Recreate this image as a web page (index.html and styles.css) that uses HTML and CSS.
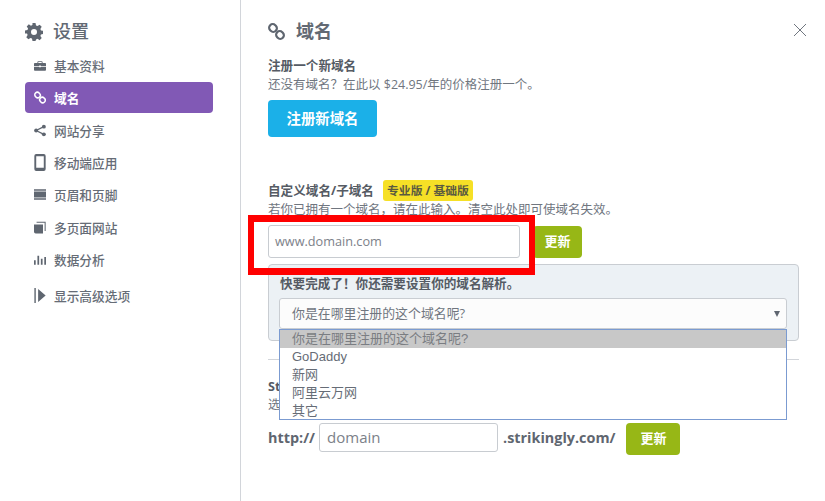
FILE: index.html
```html
<!DOCTYPE html>
<html lang="zh">
<head>
<meta charset="utf-8">
<title>设置</title>
<link rel="stylesheet" href="styles.css">
</head>
<body>
<div class="app">
  <aside class="sidebar">
    <div class="side-title">
      <svg class="gear" viewBox="0 0 24 24"><path fill="#5f6670" fill-rule="evenodd" d="M10 0h4l.7 3.300 2 .8L19.500 2.300l2.800 2.800-1.800 2.800.8 2 3.300.7v4l-3.300.7-.8 2 1.800 2.800-2.800 2.800-2.800-1.800-2 .8L14 24h-4l-.7-3.300-2-.8-2.800 1.800-2.800-2.800 1.800-2.800-.8-2L0 14v-4l3.300-.7.8-2-1.800-2.800 2.800-2.800 2.800 1.800 2-.8zM12 8a4 4 0 1 0 0 8 4 4 0 0 0 0-8z"/></svg>
      <span>设置</span>
    </div>
    <nav class="nav">
      <a class="nav-item first"><svg class="ico" viewBox="0 0 14 14"><path fill="#5f6670" d="M5 2h4a1 1 0 0 1 1 1v1h3a1 1 0 0 1 1 1v2.500H8V7H6v.5H0V5a1 1 0 0 1 1-1h3V3a1 1 0 0 1 1-1zm0 1v1h4V3zM0 8.500h6V9h2v-.5h6V12a1 1 0 0 1-1 1H1a1 1 0 0 1-1-1z"/></svg>基本资料</a>
      <a class="nav-item active"><svg class="ico" viewBox="0 0 17 17"><g fill="none" stroke="#fff" stroke-width="2.200"><rect x="1" y="1.400" width="8" height="7.200" rx="3.600" transform="rotate(45 5 5)"/><rect x="8" y="8.400" width="8" height="7.200" rx="3.600" transform="rotate(45 12 12)"/></g></svg>域名</a>
      <a class="nav-item"><svg class="ico" viewBox="0 0 14 14"><g fill="#5f6670"><circle cx="11.500" cy="2.500" r="2.300"/><circle cx="2.500" cy="7" r="2.300"/><circle cx="11.500" cy="11.500" r="2.300"/></g><path fill="none" stroke="#5f6670" stroke-width="1.400" d="M11.500 2.500L2.500 7l9 4.500"/></svg>网站分享</a>
      <a class="nav-item"><svg class="ico ico-tall" viewBox="0 0 12 18"><path fill="#5f6670" fill-rule="evenodd" d="M2 0h8a2 2 0 0 1 2 2v14a2 2 0 0 1-2 2H2a2 2 0 0 1-2-2V2a2 2 0 0 1 2-2zm0 2.500v12h8v-12z"/></svg>移动端应用</a>
      <a class="nav-item"><svg class="ico" viewBox="0 0 14 14"><path fill="#5f6670" d="M0 1h14v1.500H0zM0 3.500h14v7H0zM0 11.500h14V13H0z"/></svg>页眉和页脚</a>
      <a class="nav-item"><svg class="ico" viewBox="0 0 14 14"><path fill="#5f6670" d="M0 3.500h10.500V14H2a2 2 0 0 1-2-2z"/><path fill="none" stroke="#5f6670" stroke-width="1.200" d="M3 1h10v10"/></svg>多页面网站</a>
      <a class="nav-item"><svg class="ico" viewBox="0 0 14 14"><path fill="#5f6670" d="M0 8h2v5H0zM4 2.500h2V13H4zM8 6h2v7H8zM12 4h2v9h-2z"/></svg>数据分析</a>
      <a class="nav-item nav-adv"><svg class="ico ico-adv" viewBox="0 0 12 16"><path fill="#5f6670" d="M0 0h1.500v16H0zM4 1l8 7-8 7z"/></svg>显示高级选项</a>
    </nav>
  </aside>

  <main class="main">
    <svg class="close" viewBox="0 0 14 14"><path fill="none" stroke="#70767f" d="M1 1l12 12M13 1L1 13"/></svg>

    <header class="main-title">
      <svg class="link-big" viewBox="0 0 17 17"><g fill="none" stroke="#5f6670" stroke-width="2.200"><rect x="1" y="1.400" width="8" height="7.200" rx="3.600" transform="rotate(45 5 5)"/><rect x="8" y="8.400" width="8" height="7.200" rx="3.600" transform="rotate(45 12 12)"/></g></svg>
      <span>域名</span>
    </header>

    <section class="register">
      <h3 class="label">注册一个新域名</h3>
      <p class="desc">还没有域名？在此以 $24.95/年的价格注册一个。</p>
      <button class="btn-blue">注册新域名</button>
    </section>

    <section class="custom">
      <div class="custom-head">
        <h3 class="label">自定义域名/子域名</h3>
        <span class="badge">专业版 / 基础版</span>
      </div>
      <p class="desc">若你已拥有一个域名，请在此输入。清空此处即可使域名失效。</p>
      <div class="input-row">
        <div class="field field-main">www.domain.com</div>
        <button class="btn-green btn-update">更新</button>
      </div>
      <div class="panel">
        <p class="panel-title">快要完成了！你还需要设置你的域名解析。</p>
        <div class="select">
          <span>你是在哪里注册的这个域名呢?</span>
          <i class="caret"></i>
          <ul class="options">
            <li class="selected">你是在哪里注册的这个域名呢?</li>
            <li>GoDaddy</li>
            <li>新网</li>
            <li>阿里云万网</li>
            <li>其它</li>
          </ul>
        </div>
      </div>
    </section>

    <section class="sub">
      <h3 class="label">Strikingly 子域名</h3>
      <p class="desc">选择一个子域名。</p>
      <div class="sub-row">
        <span class="affix">http://</span>
        <div class="field field-sub">domain</div>
        <span class="affix">.strikingly.com/</span>
        <button class="btn-green btn-sub">更新</button>
      </div>
    </section>

    <div class="highlight"></div>
  </main>
</div>
</body>
</html>
```

FILE: styles.css
```css
* { box-sizing: border-box; }
html, body { margin: 0; height: 100%; }
body {
  width: 825px;
  height: 501px;
  overflow: hidden;
  background: #fff;
  color: #5f6670;
  font-family: "Open Sans", "Noto Sans CJK SC", sans-serif;
  font-size: 13px;
}
.app { display: flex; height: 501px; }

.sidebar {
  width: 241px;
  flex: none;
  border-right: 1px solid #d2d5da;
  padding: 17px 27px 0 25px;
}
.side-title {
  display: flex;
  align-items: center;
  height: 25px;
  font-size: 18px;
  font-weight: 500;
  color: #626973;
}
.gear { width: 18px; height: 18px; margin: 4px 10px 0 0; }
.nav { display: flex; flex-direction: column; margin-top: 8px; }
.nav-item {
  display: flex;
  align-items: center;
  height: 32.3px;
  padding-left: 9px;
  font-size: 12.7px;
  font-weight: 500;
  color: #666c76;
  border-radius: 4px;
}
.nav-item.first { padding-bottom: 2px; }
.nav-item.active {
  height: 31px;
  margin: 0 0 .7px;
  background: #8159b5;
  color: #fff;
  font-weight: 700;
}
.nav-adv { margin-top: 4px; }
.ico { width: 12px; height: 13px; margin-right: 8px; flex: none; }
.ico-tall { height: 17px; }
.ico-adv { height: 15px; }

.main {
  position: relative;
  flex: 1;
  padding: 17px 26px 0 27px;
}
.close { position: absolute; left: 552px; top: 23px; width: 14px; height: 14px; }
.main-title {
  display: flex;
  align-items: center;
  height: 25px;
  font-size: 18px;
  font-weight: 700;
  color: #626973;
}
.link-big { width: 17px; height: 17px; margin: 3px 11px 0 0; }

.label { margin: 0; font-size: 12.6px; line-height: 18px; font-weight: 700; color: #555b64; }
.desc { margin: 0; font-size: 12.5px; line-height: 18px; color: #70767f; }

.register { margin-top: 15px; }
.register .desc { margin-top: 1px; }
.btn-blue {
  display: block;
  width: 109px;
  height: 37px;
  margin-top: 6px;
  padding: 0 0 3px;
  border: 0;
  border-radius: 4px;
  background: #1bb0e8;
  color: #fff;
  font: 700 14.4px "Open Sans", "Noto Sans CJK SC", sans-serif;
}

.custom { margin-top: 43px; }
.custom-head { display: flex; align-items: flex-start; height: 21px; }
.custom-head .label { margin-top: 2px; }
.badge {
  margin-left: 9px;
  width: 90px;
  height: 21px;
  line-height: 20px;
  text-align: center;
  background: #f6e026;
  border-radius: 3px;
  font-size: 11.8px;
  font-weight: 700;
  color: #5a5a40;
}

.input-row { display: flex; align-items: flex-start; margin-top: 6px; }
.field {
  border: 1px solid #c8ccd1;
  border-radius: 3px;
  background: #fff;
  color: #7c8189;
}
.field-main { width: 252px; height: 33px; line-height: 31px; padding-left: 6px; font-size: 12.7px; }
.btn-green {
  padding: 0 0 3px;
  border: 0;
  border-radius: 4px;
  background: #97b716;
  color: #fff;
  font: 700 13px "Open Sans", "Noto Sans CJK SC", sans-serif;
}
.btn-update { width: 49px; height: 32px; margin: 1px 0 0 13px; }

.panel {
  width: 531px;
  height: 77px;
  margin-top: 6px;
  padding: 9px 10px 0;
  background: #ecf1f5;
  border: 1px solid #c9cdd2;
  border-radius: 4px;
}
.panel-title { margin: 0 0 0 1px; font-size: 12.6px; line-height: 20px; font-weight: 700; color: #555b64; }
.select {
  position: relative;
  width: 508px;
  height: 31px;
  margin-top: 4px;
  padding-left: 12px;
  font-size: 12.9px;
  line-height: 29px;
  background: #fcfcfc;
  border: 1px solid #c9cdd2;
  border-radius: 3px;
  color: #70767f;
}
.caret {
  position: absolute;
  right: 6px;
  top: 12px;
  border-left: 3px solid transparent;
  border-right: 3px solid transparent;
  border-top: 6px solid #5f6670;
}
.options {
  position: absolute;
  left: -1px;
  top: 30px;
  z-index: 2;
  width: 508px;
  height: 91px;
  margin: 0;
  padding: 0;
  list-style: none;
  overflow: hidden;
  background: #fff;
  border: 1px solid #7b9bd1;
  font-family: "Liberation Sans", "Noto Sans CJK SC", sans-serif;
  font-size: 13px;
  line-height: 18px;
  color: #666c76;
}
.options li { padding-left: 12px; height: 18px; }
.options .selected { background: #c8c8c8; color: #7a7d82; }

.sub {
  width: 531px;
  margin-top: 18px;
  padding-top: 18px;
  border-top: 1px solid #d2d5da;
  height: 100px;
}
.sub-row { display: flex; align-items: flex-start; margin-top: 9px; }
.affix { font-size: 14.4px; font-weight: 700; color: #5f6670; line-height: 29px; }
.field-sub { width: 179px; height: 29px; line-height: 27px; padding-left: 7px; margin: 0 5px 0 4px; font-size: 15px; }
.btn-sub { width: 54px; height: 32px; margin-left: 11px; }

.highlight {
  position: absolute;
  left: 7px;
  top: 215px;
  width: 287px;
  height: 60px;
  border: 7px solid #ff0000;
  border-width: 7px 6px;
  z-index: 3;
}
```
